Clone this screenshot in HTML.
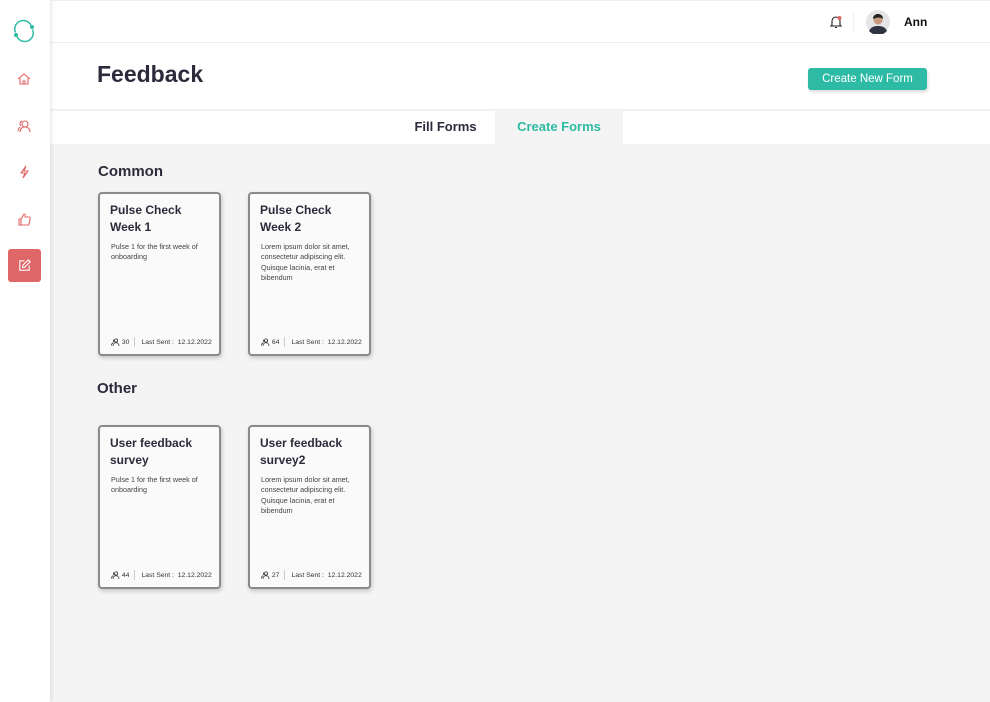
<!DOCTYPE html>
<html><head><meta charset="utf-8"><style>
*{box-sizing:border-box;margin:0;padding:0}
body{width:990px;height:702px;overflow:hidden;background:#f4f4f4;font-family:"Liberation Sans",sans-serif;color:#2b2b3b;position:relative}
.side{position:absolute;left:0;top:0;width:50px;height:702px;background:#fff;box-shadow:2px 0 3px rgba(0,0,0,.08);z-index:3}
.side .ic{position:absolute;left:16px;width:16px;height:16px}
.top{position:absolute;left:50px;top:0;right:0;height:43px;background:#fff;border-bottom:1px solid #eee;border-top:1px solid #eee}
.titlebar{position:absolute;left:50px;top:43px;right:0;height:67px;background:#fff;border-bottom:1px solid #eee}
.tabs{position:absolute;left:50px;top:111px;right:0;height:33px;background:#fff}
h1{position:absolute;left:97px;top:61px;font-size:23px;font-weight:bold;color:#2b2b3b}
.btn{position:absolute;left:808px;top:68px;width:119px;height:22px;background:#2dbba5;color:#fff;font-size:11.5px;line-height:23px;text-align:center;border-radius:3px;box-shadow:1px 2px 3px rgba(0,0,0,.15)}
.tab{position:absolute;top:111px;height:33px;line-height:32px;font-size:13px;font-weight:bold;text-align:center}
.sec{position:absolute;font-size:15px;font-weight:bold;color:#2b2b3b}
.card{position:absolute;width:123px;height:164px;background:#fafafa;border:2px solid #8a8a8a;border-radius:4px;box-shadow:1px 2px 4px rgba(0,0,0,.2)}
.card b{position:absolute;left:10px;top:8px;font-size:12px;line-height:16.5px;color:#2b2b3b}
.card p{position:absolute;left:11px;top:48px;width:105px;font-size:7.2px;line-height:10.3px;color:#444}
.card .ft{position:absolute;left:11px;bottom:7px;font-size:6.8px;color:#333;white-space:nowrap;display:flex;align-items:center}
.card .ft .sep{display:inline-block;width:1px;height:10px;background:#ccc;margin:0 6px 0 5px}
</style></head><body>
<div class="side">
<svg style="position:absolute;left:12px;top:19px" width="24" height="24" viewBox="0 0 24 24" fill="none" stroke="#2dbba5" stroke-width="1.5"><path d="M3.5 13.5A8.5 8.5 0 0 1 19 6.5"/><path d="M20.5 10.5A8.5 8.5 0 0 1 5 17.5"/><circle cx="20" cy="8" r="1.2" fill="#2dbba5"/><circle cx="4" cy="16" r="1.2" fill="#2dbba5"/></svg>
<svg class="ic" style="top:71px" viewBox="0 0 16 16" fill="none" stroke="#e06767" stroke-width="1.1"><path d="M2 8L8 3l6 5M4 7v6h8V7M7 13v-3h2v3"/></svg>
<svg class="ic" style="top:118px" viewBox="0 0 16 16" fill="none" stroke="#e06767" stroke-width="1.1"><circle cx="9" cy="6" r="3"/><path d="M4 14c0-3 2-5 5-5s5 2 5 5M6 3a3 3 0 0 0-1 5M2 13c0-2 1-3 2-4"/></svg>
<svg class="ic" style="top:164px" viewBox="0 0 16 16" fill="none" stroke="#e06767" stroke-width="1.1"><path d="M10 2L5 9h4l-2 5 5-7H8l2-5z"/></svg>
<svg class="ic" style="top:211px" viewBox="0 0 16 16" fill="none" stroke="#e06767" stroke-width="1.1"><path d="M3 8h2v6H3zM5 8l3-5c1 0 1.5 1 1 3h4c1 0 1.5 1 1 2l-1 5c0 .5-.5 1-1 1H5"/></svg>
<div style="position:absolute;left:8px;top:249px;width:33px;height:33px;background:#e06767;border-radius:3px"></div>
<svg style="position:absolute;left:17px;top:258px" width="15" height="15" viewBox="0 0 16 16" fill="none" stroke="#fff" stroke-width="1.2"><path d="M8 3H3v10h10V8"/><path d="M12 2l2 2-6 6H6V8z"/></svg>
</div>
<div class="top"></div>
<svg style="position:absolute;left:829px;top:15px" width="14" height="14" viewBox="0 0 14 14" fill="none" stroke="#222" stroke-width="1.1"><path d="M3 10V6a4 4 0 0 1 8 0v4l1 1H2zM6 12.5h2"/><circle cx="10.5" cy="3" r="2" fill="#e06767" stroke="none"/></svg>
<div style="position:absolute;left:853px;top:12px;width:1px;height:20px;background:#f0f0f0"></div>
<svg style="position:absolute;left:866px;top:10px" width="24" height="24" viewBox="0 0 24 24"><circle cx="12" cy="12" r="12" fill="#e5e5e5"/><path d="M3 21c2-4 5-5 9-5s7 1 9 5a12 12 0 0 1-18 0z" fill="#2f3440"/><circle cx="12" cy="10" r="4.5" fill="#c99a80"/><path d="M7 9c0-4 3-5 5-5s5 1 5 5c-2-2-6-2-10 0z" fill="#222"/></svg>
<div style="position:absolute;left:904px;top:15px;font-size:12px;font-weight:bold;color:#111">Ann</div>
<div class="titlebar"></div>
<h1>Feedback</h1>
<div class="btn">Create New Form</div>
<div class="tabs"></div>
<div class="tab" style="left:396px;width:99px;color:#2b2b3b">Fill Forms</div>
<div class="tab" style="left:495px;width:128px;color:#2dbba5;background:#f4f4f4">Create Forms</div>
<div class="sec" style="left:98px;top:163px">Common</div>
<div class="sec" style="left:97px;top:380px">Other</div>

<div class="card" style="left:98px;top:192px"><b>Pulse Check<br>Week 1</b><p>Pulse 1 for the first week of onboarding</p><div class="ft"><svg width="9" height="8" viewBox="0 0 9 8" fill="none" stroke="#333" stroke-width=".8"><circle cx="5" cy="2.5" r="1.6"/><path d="M2 8c0-2 1.3-3.3 3-3.3S8 6 8 8M3 1.5a1.6 1.6 0 0 0 0 2.5M.5 7.5c0-1.3.6-2.3 1.5-2.8"/></svg>&nbsp;30<span class="sep"></span>Last Sent :&nbsp; 12.12.2022</div></div>
<div class="card" style="left:248px;top:192px"><b>Pulse Check<br>Week 2</b><p>Lorem ipsum dolor sit amet, consectetur adipiscing elit. Quisque lacinia, erat et bibendum</p><div class="ft"><svg width="9" height="8" viewBox="0 0 9 8" fill="none" stroke="#333" stroke-width=".8"><circle cx="5" cy="2.5" r="1.6"/><path d="M2 8c0-2 1.3-3.3 3-3.3S8 6 8 8M3 1.5a1.6 1.6 0 0 0 0 2.5M.5 7.5c0-1.3.6-2.3 1.5-2.8"/></svg>&nbsp;64<span class="sep"></span>Last Sent :&nbsp; 12.12.2022</div></div>
<div class="card" style="left:98px;top:425px"><b>User feedback<br>survey</b><p>Pulse 1 for the first week of onboarding</p><div class="ft"><svg width="9" height="8" viewBox="0 0 9 8" fill="none" stroke="#333" stroke-width=".8"><circle cx="5" cy="2.5" r="1.6"/><path d="M2 8c0-2 1.3-3.3 3-3.3S8 6 8 8M3 1.5a1.6 1.6 0 0 0 0 2.5M.5 7.5c0-1.3.6-2.3 1.5-2.8"/></svg>&nbsp;44<span class="sep"></span>Last Sent :&nbsp; 12.12.2022</div></div>
<div class="card" style="left:248px;top:425px"><b>User feedback<br>survey2</b><p>Lorem ipsum dolor sit amet, consectetur adipiscing elit. Quisque lacinia, erat et bibendum</p><div class="ft"><svg width="9" height="8" viewBox="0 0 9 8" fill="none" stroke="#333" stroke-width=".8"><circle cx="5" cy="2.5" r="1.6"/><path d="M2 8c0-2 1.3-3.3 3-3.3S8 6 8 8M3 1.5a1.6 1.6 0 0 0 0 2.5M.5 7.5c0-1.3.6-2.3 1.5-2.8"/></svg>&nbsp;27<span class="sep"></span>Last Sent :&nbsp; 12.12.2022</div></div>
</body></html>
